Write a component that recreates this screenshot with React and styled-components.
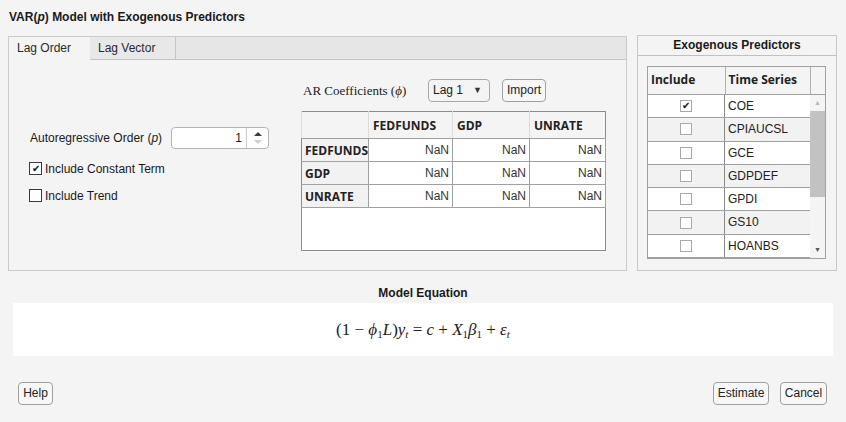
import React from "react";
import styled, { createGlobalStyle } from "styled-components";

const GlobalStyle = createGlobalStyle`
  html, body {
    margin: 0;
    padding: 0;
    background: #f4f4f4;
  }
  body {
    font-family: "Liberation Sans", Arial, sans-serif;
    font-size: 12px;
    color: #1a1a1a;
  }
`;

const coefNames = ["FEDFUNDS", "GDP", "UNRATE"];
const seriesList = [
  { name: "COE", on: true },
  { name: "CPIAUCSL", on: false },
  { name: "GCE", on: false },
  { name: "GDPDEF", on: false },
  { name: "GPDI", on: false },
  { name: "GS10", on: false },
  { name: "HOANBS", on: false },
  { name: "", on: false },
];

const App = () => {
  return (
    <Page>
      <GlobalStyle />
      <Title>
        VAR(<i>p</i>) Model with Exogenous Predictors
      </Title>

      <TopRow>
        <TabPanel>
          <TabBar>
            <Tab $active>Lag Order</Tab>
            <Tab>Lag Vector</Tab>
          </TabBar>
          <TabBody>
            <LeftColumn>
              <FieldRow>
                <FieldLabel>
                  Autoregressive Order (<i>p</i>)
                </FieldLabel>
                <Spinner>
                  <SpinValue>1</SpinValue>
                  <SpinArrows>
                    <Arrow $up />
                    <Arrow $disabled />
                  </SpinArrows>
                </Spinner>
              </FieldRow>
              <CheckRow>
                <CheckBox>{"\u2714"}</CheckBox>
                Include Constant Term
              </CheckRow>
              <CheckRow>
                <CheckBox />
                Include Trend
              </CheckRow>
            </LeftColumn>

            <RightColumn>
              <CoefBar>
                <CoefLabel>
                  AR Coefficients (<i>ϕ</i>)
                </CoefLabel>
                <Dropdown>
                  Lag 1 <DropArrow>▼</DropArrow>
                </Dropdown>
                <Button $w="44px">Import</Button>
              </CoefBar>
              <CoefTable>
                <thead>
                  <tr>
                    <HeadCell $w="67px" />
                    <HeadCell $w="84px">FEDFUNDS</HeadCell>
                    <HeadCell $w="77px">GDP</HeadCell>
                    <HeadCell>UNRATE</HeadCell>
                  </tr>
                </thead>
                <tbody>
                  {coefNames.map((row) => (
                    <tr key={row}>
                      <RowHead>{row}</RowHead>
                      {coefNames.map((col) => (
                        <ValueCell key={col}>NaN</ValueCell>
                      ))}
                    </tr>
                  ))}
                  <tr>
                    <FillCell colSpan={4} />
                  </tr>
                </tbody>
              </CoefTable>
            </RightColumn>
          </TabBody>
        </TabPanel>

        <GroupPanel>
          <GroupHeader>Exogenous Predictors</GroupHeader>
          <SeriesTable>
            <SeriesHead>
              <SeriesHeadCell $w="77px">Include</SeriesHeadCell>
              <SeriesHeadCell $w="86px">Time Series</SeriesHeadCell>
              <SeriesHeadCell $w="15px" />
            </SeriesHead>
            <SeriesBody>
              <SeriesRows>
                {seriesList.map((s, i) => (
                  <SeriesRow key={i} $odd={i % 2 === 1}>
                    <IncludeCell>
                      <SmallBox>{s.on ? "\u2714" : ""}</SmallBox>
                    </IncludeCell>
                    <NameCell>{s.name}</NameCell>
                  </SeriesRow>
                ))}
              </SeriesRows>
              <ScrollBar>
                <ScrollArrow>▲</ScrollArrow>
                <Thumb />
                <ScrollSpace />
                <ScrollArrow $dark>▼</ScrollArrow>
              </ScrollBar>
            </SeriesBody>
          </SeriesTable>
        </GroupPanel>
      </TopRow>

      <SectionLabel>Model Equation</SectionLabel>
      <EquationBox>
        <Equation>
          (1 − <i>ϕ</i>
          <sub>1</sub>
          <i>L</i>)<i>y</i>
          <sub>
            <i>t</i>
          </sub>{" "}
          = <i>c</i> + <i>X</i>
          <sub>1</sub>
          <i>β</i>
          <sub>1</sub> + <i>ε</i>
          <sub>
            <i>t</i>
          </sub>
        </Equation>
      </EquationBox>

      <Footer>
        <Button $w="35px">Help</Button>
        <FooterRight>
          <Button $w="56px">Estimate</Button>
          <Button $w="47px">Cancel</Button>
        </FooterRight>
      </Footer>
    </Page>
  );
};

export default App;

const Page = styled.div`
  width: 846px;
  height: 422px;
  box-sizing: border-box;
  overflow: hidden;
`;

const Title = styled.div`
  padding: 10px 0 0 9px;
  height: 14px;
  line-height: 14px;
  font-weight: bold;
  font-size: 12px;
`;

const TopRow = styled.div`
  display: flex;
  align-items: flex-start;
  gap: 10px;
  margin: 11px 0 0 8px;
  height: 236px;
`;

const TabPanel = styled.div`
  margin-top: 1px;
  width: 619px;
  height: 235px;
  box-sizing: border-box;
  border: 1px solid #cbcbcb;
  display: flex;
  flex-direction: column;
`;

const TabBar = styled.div`
  display: flex;
  height: 22px;
  background: #e6e6e6;
  border-bottom: 1px solid #c4c4c4;
`;

const Tab = styled.div`
  height: ${(p) => (p.$active ? "23px" : "22px")};
  box-sizing: border-box;
  width: ${(p) => (p.$active ? "81px" : "86px")};
  padding-left: 8px;
  line-height: 22px;
  font-size: 12px;
  color: #2a2a2a;
  background: ${(p) => (p.$active ? "#f4f4f4" : "#e8e8e8")};
  border-right: ${(p) => (p.$active ? "none" : "1px solid #c4c4c4")};
  position: relative;
  z-index: ${(p) => (p.$active ? 1 : 0)};
`;

const TabBody = styled.div`
  flex: 1;
  display: flex;
`;

const LeftColumn = styled.div`
  width: 292px;
  padding: 67px 0 0 20px;
  box-sizing: border-box;
`;

const FieldRow = styled.div`
  display: flex;
  align-items: center;
  height: 22px;
`;

const FieldLabel = styled.div`
  width: 142px;
  padding-left: 1px;
  box-sizing: border-box;
  font-size: 12px;
`;

const Spinner = styled.div`
  width: 98px;
  height: 22px;
  box-sizing: border-box;
  border: 1px solid #b4b4b4;
  border-radius: 4px;
  background: #fff;
  display: flex;
`;

const SpinValue = styled.div`
  flex: 1;
  text-align: right;
  padding-right: 4px;
  line-height: 20px;
`;

const SpinArrows = styled.div`
  width: 21px;
  border-left: 1px solid #c8c8c8;
  display: flex;
  flex-direction: column;
  align-items: center;
  justify-content: center;
`;

const Arrow = styled.div`
  width: 0;
  height: 0;
  margin: 2px 0;
  border-left: 4px solid transparent;
  border-right: 4px solid transparent;
  ${(p) =>
    p.$up
      ? "border-bottom: 4px solid #3c3c3c;"
      : "border-top: 4px solid #cfcfcf;"}
`;

const CheckRow = styled.div`
  display: flex;
  align-items: center;
  gap: 3px;
  margin-top: 12px;
  height: 15px;
  font-size: 12px;
`;

const CheckBox = styled.div`
  width: 13px;
  height: 13px;
  box-sizing: border-box;
  border: 1px solid #3a3a3a;
  background: #fff;
  font-size: 10px;
  line-height: 11px;
  text-align: center;
  color: #111;
`;

const RightColumn = styled.div`
  padding-top: 19px;
`;

const CoefBar = styled.div`
  display: flex;
  align-items: center;
  height: 23px;
`;

const CoefLabel = styled.div`
  width: 127px;
  padding-left: 2px;
  box-sizing: border-box;
  font-family: "Liberation Serif", "Times New Roman", serif;
  font-size: 13px;
  color: #222;
`;

const Dropdown = styled.div`
  width: 62px;
  height: 23px;
  box-sizing: border-box;
  border: 1px solid #a8a8a8;
  border-radius: 4px;
  padding-left: 4px;
  line-height: 21px;
  font-size: 12px;
  display: flex;
  margin-right: 12px;
`;

const DropArrow = styled.span`
  margin-left: 10px;
  font-size: 9px;
  color: #333;
`;

const Button = styled.div`
  width: ${(p) => p.$w};
  height: 23px;
  box-sizing: border-box;
  border: 1px solid #a0a0a0;
  border-radius: 4px;
  background: #f7f7f7;
  text-align: center;
  line-height: 21px;
  font-size: 12px;
  color: #222;
`;

const CoefTable = styled.table`
  margin-top: 9px;
  width: 305px;
  height: 140px;
  border-collapse: collapse;
  table-layout: fixed;
  border: 1px solid #8c8c8c;
  font-family: "Open Sans", "Liberation Sans", sans-serif;
  font-size: 12px;
  background: #fff;
`;

const HeadCell = styled.th`
  box-sizing: border-box;
  width: ${(p) => p.$w || "auto"};
  height: 27px;
  padding: 0 4px;
  text-align: left;
  font-weight: bold;
  background: #f4f4f4;
  border-left: 1px solid #dcdcdc;
  border-bottom: 1px solid #a0a0a0;
  color: #222;
  white-space: nowrap;
  overflow: hidden;
`;

const RowHead = styled.td`
  height: 22px;
  padding: 0 3px;
  font-weight: bold;
  background: #f2f2f2;
  border-bottom: 1px solid #a0a0a0;
  border-right: 1px solid #a0a0a0;
  color: #222;
  white-space: nowrap;
  overflow: hidden;
`;

const ValueCell = styled.td`
  height: 22px;
  padding: 0 3px;
  text-align: right;
  font-family: "Liberation Sans", Arial, sans-serif;
  border-bottom: 1px solid #a0a0a0;
  border-right: 1px solid #a0a0a0;
  color: #333;
`;

const FillCell = styled.td`
  background: #fff;
`;

const GroupPanel = styled.div`
  width: 200px;
  height: 236px;
  box-sizing: border-box;
  border: 1px solid #c8c8c8;
`;

const GroupHeader = styled.div`
  height: 19px;
  line-height: 19px;
  border-bottom: 1px solid #c0c0c0;
  text-align: center;
  font-weight: bold;
  font-size: 12px;
`;

const SeriesTable = styled.div`
  margin: 10px 0 0 9px;
  width: 179px;
  height: 193px;
  box-sizing: border-box;
  border: 1px solid #a0a0a0;
  display: flex;
  flex-direction: column;
  background: #fff;
`;

const SeriesHead = styled.div`
  display: flex;
  height: 27px;
  border-bottom: 1px solid #a0a0a0;
  background: #f4f4f4;
`;

const SeriesHeadCell = styled.div`
  width: ${(p) => p.$w};
  box-sizing: border-box;
  padding-left: 3px;
  line-height: 26px;
  font-family: "Open Sans", "Liberation Sans", sans-serif;
  font-weight: bold;
  font-size: 12px;
  color: #222;
  & + & {
    border-left: 1px solid #b0b0b0;
  }
`;

const SeriesBody = styled.div`
  flex: 1;
  display: flex;
  overflow: hidden;
`;

const SeriesRows = styled.div`
  width: 162px;
  overflow: hidden;
`;

const SeriesRow = styled.div`
  display: flex;
  height: 23.3px;
  box-sizing: border-box;
  border-bottom: 1px solid #a0a0a0;
  background: ${(p) => (p.$odd ? "#f2f2f2" : "#fff")};
`;

const IncludeCell = styled.div`
  width: 76px;
  display: flex;
  align-items: center;
  justify-content: center;
  border-right: 1px solid #8a8a8a;
`;

const SmallBox = styled.div`
  width: 12px;
  height: 12px;
  box-sizing: border-box;
  border: 1px solid #a8a8a8;
  background: #fff;
  font-size: 10px;
  line-height: 10px;
  text-align: center;
  color: #111;
`;

const NameCell = styled.div`
  flex: 1;
  padding-left: 3px;
  line-height: 22px;
  font-size: 12px;
  color: #222;
`;

const ScrollBar = styled.div`
  width: 15px;
  background: #f4f4f4;
  display: flex;
  flex-direction: column;
  align-items: stretch;
`;

const ScrollArrow = styled.div`
  height: 16px;
  font-size: 7px;
  line-height: 16px;
  text-align: center;
  color: ${(p) => (p.$dark ? "#555" : "#b8b8b8")};
`;

const Thumb = styled.div`
  height: 86px;
  background: #c2c2c2;
`;

const ScrollSpace = styled.div`
  flex: 1;
`;

const SectionLabel = styled.div`
  margin-top: 15px;
  height: 14px;
  line-height: 14px;
  text-align: center;
  font-weight: bold;
  font-size: 12px;
`;

const EquationBox = styled.div`
  margin: 3px 13px 0 13px;
  height: 53px;
  background: #fff;
  display: flex;
  align-items: center;
  justify-content: center;
`;

const Equation = styled.div`
  font-family: "Liberation Serif", "Times New Roman", serif;
  font-size: 17px;
  color: #222;
  & sub {
    font-size: 11px;
    vertical-align: -3px;
    line-height: 0;
  }
`;

const Footer = styled.div`
  margin: 26px 19px 0 18px;
  display: flex;
  justify-content: space-between;
`;

const FooterRight = styled.div`
  display: flex;
  gap: 11px;
`;
